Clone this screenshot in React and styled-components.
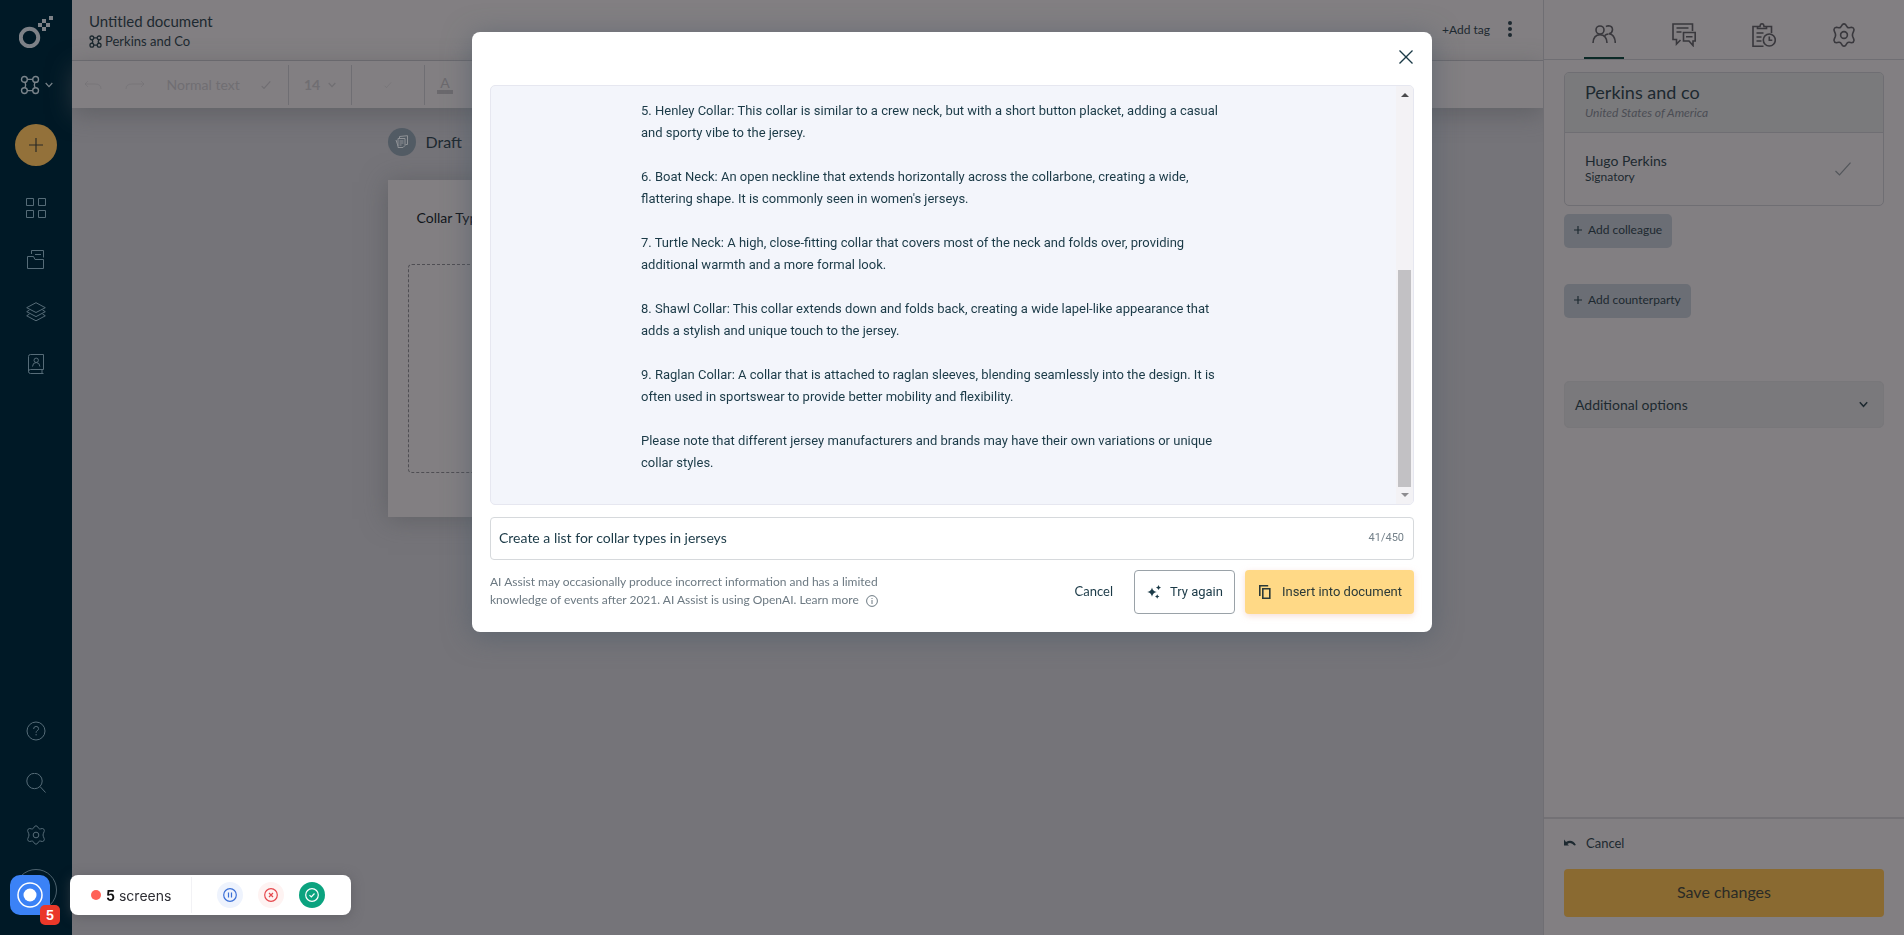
import React from "react";
import styled, { createGlobalStyle, ThemeProvider, css } from "styled-components";

const theme = {
  ink: "#1d2930",
  teal: "#1b3a47",
  surface: "#827f82",
  canvas: "#757479",
  line: "#6f6e73",
  navy: "#001926",
  navIcon: "#566c78",
  gold: "#8a6a31",
  ui: 'Lato, "Liberation Sans", sans-serif',
  body: 'Roboto, "Liberation Sans", sans-serif',
};

const Global = createGlobalStyle`
  *, *::before, *::after { box-sizing: border-box; }
  body { margin: 0; font-family: ${theme.ui}; color: ${theme.ink}; background: ${theme.canvas}; }
  button, input { font: inherit; color: inherit; }
  button { border: 0; background: none; padding: 0; cursor: pointer; }
  h1, h2, h3, p { margin: 0; font-weight: 400; }
  svg { display: block; flex: none; }
`;

/* ---------- icons ---------- */

const Svg = ({ size = 20, w = size, h = size, box, stroke = 1, children }) => (
  <svg width={w} height={h} viewBox={box || `0 0 ${w} ${h}`} fill="none" stroke="currentColor" strokeWidth={stroke} aria-hidden="true">
    {children}
  </svg>
);

const Logo = () => (
  <Svg w={34} h={32} stroke={0}>
    <circle cx="10.500" cy="21.500" r="8.700" stroke="currentColor" strokeWidth="4" />
    <g fill="currentColor">
      <rect x="30" y="0" width="4" height="4" />
      <rect x="23" y="3" width="4" height="4" />
      <rect x="19" y="7" width="4" height="4" />
      <rect x="27" y="7" width="4" height="4" />
      <rect x="23" y="11" width="4" height="4" />
    </g>
  </Svg>
);

const TeamIcon = ({ size = 20, stroke = 1.4 }) => (
  <Svg size={size} box="0 0 20 20" stroke={stroke}>
    <circle cx="4.400" cy="4.400" r="2.900" />
    <circle cx="15.600" cy="4.400" r="2.900" />
    <circle cx="4.400" cy="15.600" r="2.900" />
    <circle cx="15.600" cy="15.600" r="2.900" />
    <path d="M7.200 4.400H12.800M7.200 15.600H12.800M5 7.200Q6.400 10 5 12.800M15 7.200Q13.600 10 15 12.800" />
  </Svg>
);

const ChevronIcon = ({ w = 8, h = 6, stroke = 1.2 }) => (
  <Svg w={w} h={h} box="0 0 8 6" stroke={stroke}>
    <path d="M.7 1L4 4.600 7.300 1" />
  </Svg>
);

const PlusIcon = ({ size = 14, stroke = 1.2 }) => (
  <Svg size={size} box="0 0 14 14" stroke={stroke}>
    <path d="M7 0v14M0 7h14" />
  </Svg>
);

const GridIcon = () => (
  <Svg>
    <path d="M.5.5h7v7h-7zM12.500.5h7v7h-7zM.5 12.500h7v7h-7zM12.500 12.500h7v7h-7z" />
  </Svg>
);

const FolderIcon = () => (
  <Svg>
    <path d="M1.500 18.500v-12h6l1.500 3h8.500v9zM5.500 4V.5h12v7M9 4.500h6" />
  </Svg>
);

const LayersIcon = () => (
  <Svg>
    <path d="M10 .7l9.300 5L10 10.500.7 5.700zM3.500 8L.7 9.700 10 14.600l9.300-4.900L16.500 8M3.500 12L.7 13.800 10 18.800l9.300-5-2.800-1.800" />
  </Svg>
);

const ContactsIcon = () => (
  <Svg>
    <path d="M17.500 15.500V.5h-13q-2 0-2 2v15q0 2 2 2h13M17.500 15.500h-13q-2 0-2 2M16 15.500v4" />
    <circle cx="10.200" cy="6.300" r="2.200" />
    <path d="M6.500 12.500q.3-4 3.700-4t3.700 4" />
  </Svg>
);

const HelpIcon = () => (
  <Svg>
    <circle cx="10" cy="10" r="9" />
    <path d="M7.600 8q.1-2.600 2.500-2.600T12.600 7.700q0 1.200-1.400 2-1.100.6-1.100 2M10.100 13v1.400" />
  </Svg>
);

const SearchIcon = () => (
  <Svg>
    <circle cx="8.500" cy="8" r="7.700" />
    <path d="M14 13.500l5.500 6" />
  </Svg>
);

const GearIcon = ({ size = 20, stroke = 1.2 }) => (
  <Svg size={size} box="0 0 24 24" stroke={stroke}>
    <circle cx="12" cy="12" r="3.400" />
    <path d="M10.300 1.700Q12 .2 13.700 1.700L15.300 4.100Q16.100 4.900 17.200 4.700L19.700 4.200Q21.800 4.500 22 6.500L21.800 7.800 20.700 10.500Q20.200 12 20.700 13.500L21.800 16.200 22 17.500Q21.800 19.500 19.700 19.800L17.200 19.300Q16.100 19.100 15.300 19.900L13.700 22.300Q12 23.800 10.300 22.300L8.700 19.900Q7.900 19.100 6.800 19.300L4.300 19.800Q2.200 19.500 2 17.500L2.200 16.200 3.300 13.500Q3.800 12 3.300 10.500L2.200 7.800 2 6.500Q2.200 4.500 4.300 4.200L6.800 4.700Q7.900 4.900 8.700 4.100Z" />
  </Svg>
);

const PeopleIcon = () => (
  <Svg size={24} stroke={1.6}>
    <circle cx="8" cy="7" r="4" />
    <path d="M1 20q.4-8.300 7-8.300T15 20M14 3.600q1-.8 2.700-.8 3.700.2 3.800 4-.2 3.400-3.500 4Q23 11.600 23.300 20M16.500 11q-2.500.3-3.700 1.500" />
  </Svg>
);

const CommentsIcon = () => (
  <Svg size={24} stroke={1.6}>
    <path d="M20.500 8V1H1v15.500h3.500V21l4-4M4.500 5h12M4.500 9h5M11.500 9.500h11.700V18h-2.200v4.500L17 18h-5.500zM14 13.700h6.500" />
  </Svg>
);

const ClipboardIcon = () => (
  <Svg size={24} stroke={1.6}>
    <path d="M11.500 23.200H1V3.500h4.500v2h9v-2h5V10M5.500 5.500v-2H8q.2-2.700 2-2.700t2 2.700h2.500M4.500 10h7M4.500 14h5M4.500 18h5" />
    <circle cx="17.300" cy="17" r="6" />
    <path d="M17.300 13.500v3.700h3" />
  </Svg>
);

const DraftIcon = () => (
  <Svg size={14} stroke={1}>
    <path d="M3 12.500V3.500h7v7l-2 2zM4.500 3V1.500l8-.8v8.800H10.500M4.500 6h4M4.500 8h4M4.500 10h2M1 5l2 6" />
  </Svg>
);

const SparkleIcon = () => (
  <Svg size={14} stroke={0}>
    <g fill="currentColor">
      <path d="M5 2.500q.7 3.800 4.800 4.500Q5.700 7.700 5 11.700 4.300 7.700.2 7 4.300 6.300 5 2.500z" />
      <path d="M11.500 0q.4 2 2.500 2.500-2.100.5-2.500 2.500-.4-2-2.500-2.500 2.100-.5 2.500-2.500zM10.200 9.200q.3 1.800 2.200 2.200-1.900.4-2.200 2.300-.3-1.900-2.200-2.300 1.900-.4 2.200-2.200z" />
    </g>
  </Svg>
);

const CopyIcon = () => (
  <Svg w={12} h={14} stroke={1.6}>
    <path d="M3.800 3.800h7v9.400h-7zM.8 11V.8h8.400" />
  </Svg>
);

const InfoIcon = () => (
  <Svg size={12} stroke={1}>
    <circle cx="6" cy="6" r="5.400" />
    <path d="M6 5v4M6 3v1" />
  </Svg>
);

const CloseIcon = () => (
  <Svg size={14} stroke={1.3}>
    <path d="M.5.500l13 13M13.500.500l-13 13" />
  </Svg>
);

const CheckIcon = ({ w = 16, h = 14, stroke = 1.2 }) => (
  <Svg w={w} h={h} box="0 0 16 14" stroke={stroke}>
    <path d="M.5 9l4 4L15.500.7" />
  </Svg>
);

const UndoIcon = () => (
  <Svg w={12} h={8} stroke={0}>
    <path fill="currentColor" d="M0 .5v6h5L3.400 4.900q3.600-2.300 7 1.700L11.900 6Q8.300-.3 2 3z" />
  </Svg>
);

/* ---------- shell ---------- */

const Shell = styled.div`
  display: grid;
  grid-template-columns: 72px minmax(0, 1fr) 361px;
  min-height: 100vh;
`;

const Sidebar = styled.nav`
  display: flex;
  flex-direction: column;
  align-items: center;
  padding: 16px 0 24px;
  background: ${(p) => p.theme.navy};
  color: ${(p) => p.theme.navIcon};
`;

const LogoLink = styled.a`
  color: #7d8187;
  margin-bottom: 27px;
`;

const OrgSwitch = styled.button`
  display: flex;
  align-items: center;
  gap: 5px;
  height: 20px;
  color: #7a848b;
  margin-bottom: 29px;
`;

const Round = styled.button`
  display: grid;
  place-items: center;
  width: 42px;
  height: 42px;
  border-radius: 50%;
  ${(p) =>
    p.$filled
      ? css`background: #93713a; color: #2a2a26; margin-bottom: 16px;`
      : css`border: 1px solid #4d626e; margin-top: 8px;`}
`;

const NavItem = styled.button`
  display: grid;
  place-items: center;
  width: 52px;
  height: 52px;
`;

const NavGap = styled.div`
  margin-top: auto;
`;

/* ---------- document area ---------- */

const Main = styled.main`
  display: flex;
  flex-direction: column;
`;

const TopBar = styled.header`
  display: flex;
  align-items: flex-start;
  justify-content: space-between;
  height: 61px;
  padding: 11px 31px 0 17px;
  background: ${(p) => p.theme.surface};
  border-bottom: 1px solid ${(p) => p.theme.line};
`;

const DocTitle = styled.h1`
  font-size: 15px;
  line-height: 20px;
`;

const DocOwner = styled.p`
  display: flex;
  align-items: center;
  gap: 3px;
  font-size: 13px;
  line-height: 20px;
`;

const TagRow = styled.div`
  display: flex;
  align-items: center;
  gap: 18px;
  height: 36px;
  font-size: 12px;
`;

const Dots = styled.button`
  display: grid;
  gap: 2px;
  &::before, &::after, & > span {
    content: "";
    width: 4px;
    height: 4px;
    border-radius: 50%;
    background: ${(p) => p.theme.ink};
  }
`;

const Toolbar = styled.div`
  display: flex;
  align-items: center;
  height: 47px;
  padding-left: 12px;
  background: ${(p) => p.theme.surface};
  color: #706e72;
  font-size: 14px;
  box-shadow: 0 6px 24px rgba(75, 77, 82, 0.5);
`;

const ToolGroup = styled.div`
  display: flex;
  align-items: center;
  justify-content: ${(p) => p.$justify || "center"};
  width: ${(p) => p.$width}px;
  gap: 8px;
  padding: ${(p) => p.$pad || "0"};
  height: 40px;
  border-right: 1px solid ${(p) => p.theme.line};
`;

const TextColour = styled.button`
  width: 16px;
  margin-left: 12px;
  border-bottom: 4px solid #6b696d;
  line-height: 14px;
  color: #6b696d;
`;

const Canvas = styled.section`
  width: 100%;
  max-width: 840px;
  margin: 0 auto;
  padding-top: 20px;
`;

const Status = styled.div`
  display: flex;
  align-items: center;
  gap: 10px;
  font-size: 16px;
  line-height: 26px;
  margin-bottom: 24px;
`;

const StatusBadge = styled.span`
  display: grid;
  place-items: center;
  width: 28px;
  height: 28px;
  border-radius: 50%;
  background: #525b64;
  color: #8f9296;
`;

const Page = styled.article`
  padding: 28px 20px 44px;
  background: ${(p) => p.theme.surface};
  box-shadow: 0 2px 24px rgba(75, 77, 82, 0.5);
`;

const PageText = styled.p`
  padding-left: 9px;
  font-size: 14px;
  line-height: 20px;
  color: #10151a;
`;

const DropZone = styled.div`
  height: 209px;
  margin-top: 36px;
  border: 1px dashed #4f4e53;
  border-radius: 4px;
`;

/* ---------- right panel ---------- */

const Panel = styled.aside`
  display: flex;
  flex-direction: column;
  background: ${(p) => p.theme.surface};
  border-left: 1px solid ${(p) => p.theme.line};
`;

const Tabs = styled.div`
  display: flex;
  height: 60px;
  padding: 0 20px;
  border-bottom: 1px solid ${(p) => p.theme.line};
`;

const Tab = styled.button`
  flex: 1;
  display: flex;
  flex-direction: column;
  align-items: center;
  justify-content: space-between;
  padding-top: 23px;
  color: #39383d;
  &::after {
    content: "";
    width: 40px;
    height: 2px;
    background: ${(p) => (p.$active ? "#0c2a27" : "transparent")};
  }
`;

const PanelBody = styled.div`
  flex: 1;
  padding: 12px 20px 0;
`;

const Card = styled.section`
  border: 1px solid ${(p) => p.theme.line};
  border-radius: 5px;
  margin-bottom: 8px;
`;

const CardHead = styled.header`
  height: 60px;
  padding: 7px 20px 0;
  background: #7a7a7c;
  border-bottom: 1px solid ${(p) => p.theme.line};
  border-radius: 4px 4px 0 0;
  h2 {
    font-size: 18px;
    line-height: 24px;
  }
  p {
    font-size: 12px;
    line-height: 18px;
    font-style: italic;
    color: #4b4d54;
  }
`;

const Person = styled.div`
  display: flex;
  align-items: center;
  justify-content: space-between;
  height: 72px;
  padding: 0 32px 0 20px;
  color: #53565b;
  div {
    padding-bottom: 2px;
    color: ${(p) => p.theme.ink};
  }
  h3 {
    font-size: 14px;
    line-height: 18px;
  }
  p {
    font-size: 12px;
    line-height: 14px;
  }
`;

const AddButton = styled.button`
  display: flex;
  align-items: center;
  gap: 6px;
  height: 34px;
  padding: 0 10px 3px;
  margin-bottom: 36px;
  border-radius: 5px;
  background: #6b6e75;
  font-size: 12px;
`;

const Accordion = styled.button`
  display: flex;
  align-items: center;
  justify-content: space-between;
  width: 100%;
  height: 47px;
  margin-top: 63px;
  padding: 0 15px 1px 10px;
  border: 1px solid #78777a;
  border-radius: 5px;
  background: #7a797c;
  font-size: 14px;
`;

const PanelFoot = styled.footer`
  padding: 14px 20px 18px;
  border-top: 2px solid #737175;
`;

const CancelLink = styled.button`
  display: flex;
  align-items: center;
  gap: 10px;
  height: 20px;
  margin-bottom: 16px;
  font-size: 13px;
`;

const SaveButton = styled.button`
  width: 100%;
  height: 48px;
  padding-bottom: 3px;
  border-radius: 4px;
  background: ${(p) => p.theme.gold};
  font-size: 16px;
  color: #2a2b26;
`;

/* ---------- dialog ---------- */

const Overlay = styled.div`
  position: fixed;
  inset: 0;
  display: flex;
  align-items: flex-start;
  justify-content: center;
  padding-top: 32px;
`;

const Dialog = styled.div`
  width: 960px;
  padding: 0 18px 18px;
  border-radius: 8px;
  background: #fff;
  color: ${(p) => p.theme.teal};
  box-shadow: 0 4px 28px rgba(75, 90, 103, 0.6);
`;

const DialogHead = styled.div`
  display: flex;
  justify-content: flex-end;
  padding-top: 15px;
  height: 53px;
`;

const CloseButton = styled.button`
  display: grid;
  place-items: center;
  width: 16px;
  height: 20px;
`;

const Answer = styled.div`
  display: flex;
  justify-content: space-between;
  height: 420px;
  border: 1px solid #e6e7f0;
  border-radius: 5px;
  background: #f3f5fb;
  overflow: hidden;
`;

const AnswerText = styled.div`
  display: flex;
  flex-direction: column;
  gap: 22px;
  padding: 14px 0 0 150px;
  font-family: ${(p) => p.theme.body};
  font-size: 13px;
  line-height: 22px;
`;

const Scrollbar = styled.div`
  display: flex;
  flex-direction: column;
  align-items: center;
  justify-content: space-between;
  width: 17px;
  padding: 7px 0;
  background: #f3f2f5;
`;

const Arrow = styled.span`
  border: 4px solid transparent;
  ${(p) => (p.$down ? "border-top-color: #8d8c90; border-bottom: 0;" : "border-bottom-color: #4a4a4d; border-top: 0;")}
`;

const Thumb = styled.span`
  width: 13px;
  height: 217px;
  margin: auto 0 6px;
  background: #c2c1c4;
`;

const Prompt = styled.label`
  display: flex;
  align-items: center;
  height: 43px;
  margin: 12px 0 10px;
  padding: 0 9px 2px 8px;
  border: 1px solid #d6d9dc;
  border-radius: 4px;
  font-family: ${(p) => p.theme.body};
  font-size: 11px;
  color: #75828b;
  input {
    flex: 1;
    min-width: 0;
    padding: 0;
    border: 0;
    outline: 0;
    background: none;
    font-family: ${(p) => p.theme.ui};
    font-size: 14px;
    color: ${(p) => p.theme.teal};
  }
`;

const DialogFoot = styled.div`
  display: flex;
  align-items: center;
`;

const Disclaimer = styled.p`
  flex: 1;
  padding-bottom: 2px;
  font-size: 12px;
  line-height: 18px;
  color: #6c7982;
  a {
    color: inherit;
    text-decoration: none;
  }
  svg {
    display: inline-block;
    margin-left: 4px;
    vertical-align: -3px;
  }
`;

const Action = styled.button`
  display: flex;
  align-items: center;
  justify-content: center;
  gap: ${(p) => (p.$kind === "primary" ? 11 : 9)}px;
  height: 44px;
  border-radius: 4px;
  font-family: ${(p) => p.theme.body};
  font-size: 13px;
  ${(p) => p.$kind === "plain" && css`font-family: ${p.theme.ui}; padding: 0 21px 3px;`}
  ${(p) => p.$kind === "outline" && css`border: 1px solid #9aa2a8; padding: 0 11px 1px 12px; margin-right: 10px;`}
  ${(p) =>
    p.$kind === "primary" &&
    css`background: #ffd986; color: #2b3a38; padding: 0 12px 1px 14px; box-shadow: 0 2px 6px rgba(240, 200, 190, 0.6);`}
`;

/* ---------- recorder ---------- */

const Recorder = styled.div`
  position: fixed;
  left: 10px;
  bottom: 20px;
  display: flex;
  gap: 20px;
  font-family: Inter, "Liberation Sans", sans-serif;
`;

const RecordButton = styled.button`
  position: relative;
  display: grid;
  place-items: center;
  width: 40px;
  height: 40px;
  border-radius: 10px;
  background: #3b82f6;
  color: #fff;
`;

const Badge = styled.span`
  position: absolute;
  right: -10px;
  bottom: -10px;
  width: 20px;
  height: 20px;
  border-radius: 5px;
  background: #ea3829;
  font-size: 13px;
  line-height: 20px;
  font-weight: 700;
  text-align: center;
`;

const RecordBar = styled.div`
  display: flex;
  align-items: center;
  height: 40px;
  padding-right: 26px;
  border-radius: 8px;
  background: #fff;
  box-shadow: 0 2px 12px rgba(80, 80, 85, 0.5);
`;

const Count = styled.p`
  display: flex;
  align-items: center;
  gap: 4px;
  width: 122px;
  height: 36px;
  padding-left: 21px;
  border-right: 1px solid #f2f2f5;
  font-size: 14px;
  color: #2d2d33;
  &::before {
    content: "";
    width: 10px;
    height: 10px;
    margin-right: 1px;
    border-radius: 50%;
    background: #ff6257;
  }
  b {
    color: #111;
  }
`;

const Control = styled.button`
  display: grid;
  place-items: center;
  width: 26px;
  height: 26px;
  margin-left: ${(p) => (p.$first ? 25 : 15)}px;
  border-radius: 50%;
  color: ${(p) => p.$color};
  background: ${(p) => p.$bg};
`;

const paragraphs = [
  ["5. Henley Collar: This collar is similar to a crew neck, but with a short button placket, adding a casual", "and sporty vibe to the jersey."],
  ["6. Boat Neck: An open neckline that extends horizontally across the collarbone, creating a wide,", "flattering shape. It is commonly seen in women's jerseys."],
  ["7. Turtle Neck: A high, close-fitting collar that covers most of the neck and folds over, providing", "additional warmth and a more formal look."],
  ["8. Shawl Collar: This collar extends down and folds back, creating a wide lapel-like appearance that", "adds a stylish and unique touch to the jersey."],
  ["9. Raglan Collar: A collar that is attached to raglan sleeves, blending seamlessly into the design. It is", "often used in sportswear to provide better mobility and flexibility."],
  ["Please note that different jersey manufacturers and brands may have their own variations or unique", "collar styles."],
];

const navTop = [["Dashboard", GridIcon], ["Documents", FolderIcon], ["Templates", LayersIcon], ["Contacts", ContactsIcon]];
const navBottom = [["Help", HelpIcon], ["Search", SearchIcon], ["Settings", GearIcon]];

export default function App() {
  return (
    <ThemeProvider theme={theme}>
      <Global />
      <Shell>
        <Sidebar>
          <LogoLink href="#" aria-label="Home"><Logo /></LogoLink>
          <OrgSwitch aria-label="Switch workspace"><TeamIcon /><ChevronIcon /></OrgSwitch>
          <Round $filled aria-label="Create"><PlusIcon /></Round>
          {navTop.map(([label, Icon]) => (
            <NavItem key={label} aria-label={label}><Icon /></NavItem>
          ))}
          <NavGap />
          {navBottom.map(([label, Icon]) => (
            <NavItem key={label} aria-label={label}><Icon /></NavItem>
          ))}
          <Round aria-label="Account" />
        </Sidebar>

        <Main>
          <TopBar>
            <div>
              <DocTitle>Untitled document</DocTitle>
              <DocOwner><TeamIcon size={13} stroke={2} />Perkins and Co</DocOwner>
            </div>
            <TagRow>
              <button>+Add tag</button>
              <Dots aria-label="More"><span /></Dots>
            </TagRow>
          </TopBar>
          <Toolbar>
            <ToolGroup $width={205} $justify="space-between" $pad="0 17px 0 0">
              <Svg w={18} h={10}><path d="M1 4h10q6 0 6 5M4 1L1 4l3 3" opacity=".5" /></Svg>
              <Svg w={22} h={10}><path d="M21 4H9Q3 4 3 9M18 1l3 3-3 3" opacity=".5" /></Svg>
              <span>Normal text</span>
              <CheckIcon w={10} h={8} stroke={2} />
            </ToolGroup>
            <ToolGroup $width={63}><b>14</b><ChevronIcon /></ToolGroup>
            <ToolGroup $width={73}><CheckIcon w={14} h={6} /></ToolGroup>
            <TextColour aria-label="Text colour">A</TextColour>
          </Toolbar>
          <Canvas>
            <Status><StatusBadge><DraftIcon /></StatusBadge>Draft</Status>
            <Page>
              <PageText>Collar Types</PageText>
              <DropZone />
            </Page>
          </Canvas>
        </Main>

        <Panel>
          <Tabs>
            <Tab $active aria-label="People"><PeopleIcon /></Tab>
            <Tab aria-label="Comments"><CommentsIcon /></Tab>
            <Tab aria-label="Tasks"><ClipboardIcon /></Tab>
            <Tab aria-label="Settings"><GearIcon size={24} stroke={1.6} /></Tab>
          </Tabs>
          <PanelBody>
            <Card>
              <CardHead>
                <h2>Perkins and co</h2>
                <p>United States of America</p>
              </CardHead>
              <Person>
                <div>
                  <h3>Hugo Perkins</h3>
                  <p>Signatory</p>
                </div>
                <CheckIcon />
              </Person>
            </Card>
            <AddButton><PlusIcon size={8} stroke={2} />Add colleague</AddButton>
            <AddButton><PlusIcon size={8} stroke={2} />Add counterparty</AddButton>
            <Accordion>Additional options<ChevronIcon w={9} h={7} stroke={1.3} /></Accordion>
          </PanelBody>
          <PanelFoot>
            <CancelLink><UndoIcon />Cancel</CancelLink>
            <SaveButton>Save changes</SaveButton>
          </PanelFoot>
        </Panel>
      </Shell>

      <Overlay>
        <Dialog role="dialog" aria-modal="true" aria-label="AI Assist">
          <DialogHead>
            <CloseButton aria-label="Close"><CloseIcon /></CloseButton>
          </DialogHead>
          <Answer>
            <AnswerText>
              {paragraphs.map(([first, second]) => (
                <p key={first}>{first}<br />{second}</p>
              ))}
            </AnswerText>
            <Scrollbar aria-hidden="true"><Arrow /><Thumb /><Arrow $down /></Scrollbar>
          </Answer>
          <Prompt>
            <input type="text" defaultValue="Create a list for collar types in jerseys" maxLength={450} />
            41/450
          </Prompt>
          <DialogFoot>
            <Disclaimer>
              AI Assist may occasionally produce incorrect information and has a limited
              <br />
              knowledge of events after 2021. AI Assist is using OpenAI. <a href="#">Learn more <InfoIcon /></a>
            </Disclaimer>
            <Action $kind="plain">Cancel</Action>
            <Action $kind="outline"><SparkleIcon />Try again</Action>
            <Action $kind="primary"><CopyIcon />Insert into document</Action>
          </DialogFoot>
        </Dialog>
      </Overlay>

      <Recorder>
        <RecordButton aria-label="Record">
          <Svg size={26} stroke={1.5}>
            <circle cx="13" cy="13" r="12" />
            <circle cx="13" cy="13" r="6.500" fill="currentColor" stroke="none" />
          </Svg>
          <Badge>5</Badge>
        </RecordButton>
        <RecordBar>
          <Count><b>5</b> screens</Count>
          <Control $first $color="#3b6fd6" $bg="#eef3fd" aria-label="Pause">
            <Svg size={14} stroke={1.2}><circle cx="7" cy="7" r="6.300" /><path d="M5.500 4.500v5M8.500 4.500v5" /></Svg>
          </Control>
          <Control $color="#e5484d" $bg="#fef3f2" aria-label="Discard">
            <Svg size={14} stroke={1.2}><circle cx="7" cy="7" r="6.300" /><path d="M5 5l4 4M9 5L5 9" /></Svg>
          </Control>
          <Control $color="#fff" $bg="#0ba37f" aria-label="Finish">
            <Svg size={14} stroke={1.2}><circle cx="7" cy="7" r="6.300" /><path d="M4.500 7.200l1.800 1.800 3.200-3.500" /></Svg>
          </Control>
        </RecordBar>
      </Recorder>
    </ThemeProvider>
  );
}
